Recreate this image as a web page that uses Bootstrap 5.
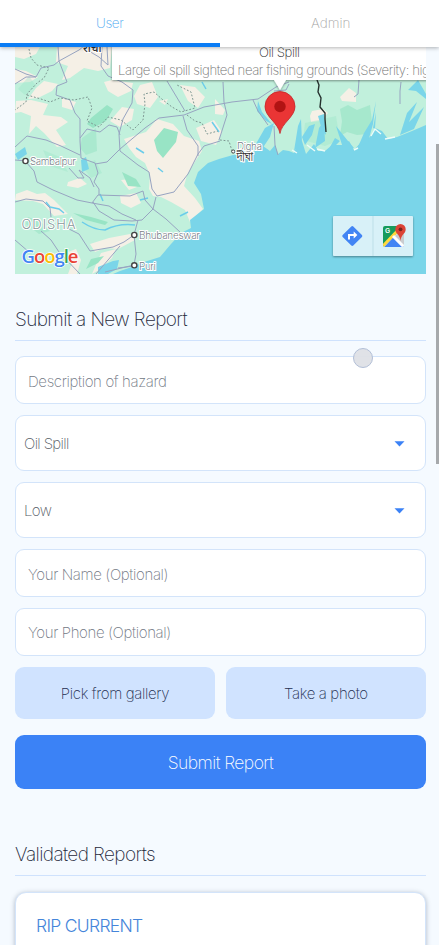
<!DOCTYPE html>
<html lang="en">
<head>
<meta charset="utf-8">
<meta name="viewport" content="width=device-width, initial-scale=1">
<title>Hazard Reports</title>
<link href="https://cdn.jsdelivr.net/npm/bootstrap@5.3.0/dist/css/bootstrap.min.css" rel="stylesheet">
<style>
html,body{height:945px;overflow:hidden}
body{background:#f5faff;font-family:Inter,"Liberation Sans",sans-serif;font-weight:200;color:#1e293b}
.tabs-bar{height:47px;box-shadow:0 1px 4px rgba(0,0,0,.3);z-index:3}
.tab-item{height:47px;font-size:13.5px;padding-top:3px;color:#a5a5a5;border-bottom:4px solid transparent}
.tab-item.on{color:#4aa8f0;border-color:#0a7cf5;letter-spacing:-.4px}
.tab-item.off{padding-left:3px}
.page-body{padding:0 13px 0 15px}
.map-box{height:227px}
.map-box svg{display:block}
.sect-title{font-size:19px;letter-spacing:-.62px;line-height:24px;font-weight:250;padding-bottom:8px;border-bottom:1px solid #cfe2fd;margin-bottom:15px}
.first-title{margin-top:34px}
.second-title{margin-top:54px;margin-bottom:16px}
.field-stack{gap:10.8px}
.form-control.field,.pick{border:1px solid #d3e4fa;border-radius:9px;background:#fff;font-size:15px;font-weight:200;color:#555c66}
.form-control.field{height:48px;padding:2px 12px 0;letter-spacing:-.37px}
.field::placeholder{color:#717783;opacity:1}
.pick{height:56.4px;padding:2px 20px 0 8px;letter-spacing:-.65px}
.soft-btn{height:52px;border-radius:9px;background:#d0e3ff;font-size:15px;font-weight:250;letter-spacing:-.35px;padding-top:8px;color:#1e2d50;border:0}
.main-btn{height:54.5px;border-radius:9px;background:#3b82f6;color:#fff;font-size:17.5px;font-weight:250;letter-spacing:-.55px;padding-top:8px;margin-top:5px;border:0}
.report-card{border:1px solid #d3e4fa;border-radius:11px;height:80px;box-shadow:0 1px 5px rgba(40,60,90,.35);padding:21px 20px}
.report-card h3{font-size:17.5px;letter-spacing:-.7px;font-weight:300;color:#4585da;line-height:24px;margin:0}
.scroll-thumb{right:0;top:144px;width:3.5px;height:320px;background:#a6a9ac;z-index:4}
.touch-dot{left:353px;top:348px;width:20px;height:20px;border:1.5px solid #b2bfd7;background:rgba(222,224,229,.94);z-index:4}
</style>
<script src="https://cdn.jsdelivr.net/npm/bootstrap@5.3.0/dist/js/bootstrap.bundle.min.js"></script>
</head>
<body>
<header class="tabs-bar d-flex bg-white position-relative">
  <div class="tab-item on w-50 d-flex align-items-center justify-content-center">User</div>
  <div class="tab-item off w-50 d-flex align-items-center justify-content-center">Admin</div>
</header>
<main class="page-body">
  <div class="map-box">
  <svg width="411" height="227" viewBox="15 47 411 227" font-family="Inter,'Noto Sans',sans-serif">
    <defs><filter id="sh" x="-10%" y="-20%" width="120%" height="150%"><feDropShadow dx="0" dy="1" stdDeviation="1" flood-opacity=".4"/></filter></defs>
    <rect x="15" y="47" width="411" height="227" fill="#c1f0dc"/>
    <!-- farmland -->
    <g fill="#f5f0e6">
      <path d="M15 47H40L36 54L24 59L15 57ZM57 47H112L110 68L98 71L84 68L70 78L62 80L68 66L56 62ZM15 69L26 71L38 77L30 82L15 83Z"/>
      <path d="M104 82L112 80L133 83L131 91L118 97L108 91ZM44 81L58 84L52 91L38 98L28 99L36 88ZM16 101L31 100L48 104L43 115L61 117L68 122L56 130L66 145L57 147L44 133L36 126L29 134L31 116L21 112L15 113ZM62 98L76 102L72 110L62 107Z"/>
      <path d="M140 85L152 82L158 97L150 108L137 104L134 96ZM159 101L168 99L165 105ZM122 107L134 109L132 120L120 127L110 121ZM180 85L195 87L205 97L198 108L188 101ZM124 139L146 132L157 119L173 124L184 136L199 141L202 151L196 160L187 175L184 186L195 198L203 209L190 222L185 210L171 202L161 197L153 196L149 189L150 175L145 163L136 157L129 148ZM196 128L214 120L222 132L216 145L201 141Z"/>
      <path d="M68 182L80 178L87 184L78 188L67 186ZM16 194L27 190L37 194L45 193L54 200L68 214L54 216L43 204L33 201L15 200ZM120 196L136 193L141 203L131 208L121 203ZM121 180L130 179L137 187L129 190ZM90 244L109 238L130 234L135 240L118 249L105 248L95 252ZM68 252L76 249L81 260L77 274H68L72 263ZM101 253L116 249L112 258L99 270L92 274Z"/>
      <path d="M340 97L349 88L356 93V102L342 101ZM310 116L312 111L323 109L328 113L320 121L311 122ZM215 99L225 110L223 115L215 114Z"/>
    </g>
    <!-- forest -->
    <g fill="#98e4c5">
      <path d="M91 118L107 105L113 109L106 121L93 128L87 124ZM154 140L164 128L178 132L176 142L163 158L157 151ZM122 172L136 179L141 187L128 186ZM73 213L91 217L108 222L105 225L86 220ZM91 259L104 256L98 263L86 269Z"/>
      <path d="M340 109L348 105L357 110L370 105L372 122L367 134L357 135L347 132L340 136L342 121Z" opacity=".65"/><path d="M82 138L96 128L97 151L86 155L80 148ZM28 217L40 221L50 231L39 234L26 224Z" opacity=".55"/>
      <path d="M18 89L29 76L36 86L25 95ZM43 150L60 157L68 172L50 166ZM82 166L95 160L102 173L91 178ZM305 123L336 116L340 140L325 146L303 140Z" opacity=".35"/>
    </g>
    <!-- sea -->
    <path d="M426 125L412 131L397 137L388 139L382 131L375 128L370 137L362 141L354 150L349 141L343 145L332 145L325 151L318 151L314 144L306 154L302 141L297 145L294 153L289 151L283 150L278 154L275 145L270 151L263 146L258 150L248 154L233 155L219 159L208 163L198 172L194 183L201 194L204 209L190 220L191 228L181 233L171 244L160 257L144 262L132 267L120 271L113 274H426Z" fill="#7ad5e9"/>
    <!-- deltas, rivers and lakes -->
    <g fill="#7ad5e9">
      <path d="M253 149L265 128L274 123L270 137L260 152ZM294 151L298 126L301 119L302 143ZM302 137L309 126L315 124L312 135L305 145ZM315 148L319 128L324 121L325 141ZM318 116L324 114L326 135L322 130ZM330 147L335 138L340 141L335 146ZM358 147L364 133L372 120L376 101L373 124L368 142ZM343 148L336 126L348 141L354 148ZM373 128L376 112L375 129ZM400 135L407 113L417 102L409 122L424 107L414 129ZM408 90L418 80L426 94V99L416 91ZM15 154L25 147L27 154L18 160ZM81 160L86 157L89 169L82 172ZM98 267L113 261L119 260L117 269L108 274H98Z"/>
      <path d="M258 101L262 112L272 124L266 121L257 111Z"/>
    </g>
    <g fill="none" stroke="#6bcdea" stroke-width="1.5"><path d="M82 222Q94 230 105 230Q119 223 135 225M46 202L50 207L59 209L64 213M136 148L144 153M158 168L163 172M180 216L188 212M202 82L206 89M212 122L219 132M100 194L103 201M140 200L148 198"/></g>
    <path d="M371 136L375 129L381 134M385 139L395 137M354 150L358 148M317 149L325 151M307 145L315 151M292 150L297 153" fill="none" stroke="#eefcf8" stroke-width="1.4"/>
    <!-- roads -->
    <g fill="none" stroke="#97a4c1" stroke-width="1">
      <path d="M15 84L26 77L36 77L41 68L54 65L59 61L79 50L83 47M15 69L26 74L36 77M58 47L59 61L67 82L57 86L56 95L70 100L75 113L80 119V141L81 158L95 163L98 173L94 182L99 189L99 195M82 47L99 57L108 65L107 47M102 47L101 66L108 76L122 82L133 90L132 103L123 119L119 134L120 151L138 165L149 172L152 189L157 196L174 192L188 174L198 154L204 146L220 141M80 138L87 129L100 132L109 125L117 127L120 135M15 147L27 136L46 140L61 146L80 155M120 149L116 153L107 162L95 164M120 149L145 128L159 118L184 115L204 107L232 102L258 99L276 87L289 82M167 81L185 111M183 116L187 130L198 146L198 156M25 161L34 171L37 182L53 190L77 200L92 203L98 195L130 196L143 191L145 200L153 209L156 197M93 202L99 211L114 220L132 221L142 220L153 209L166 219L180 232M15 160L27 161M69 168L78 178L84 178L79 170L90 178L94 187M15 202L26 199L43 201L50 208L51 217M92 203L109 206L122 214L136 220M41 231L51 240L59 252L80 274M15 240L29 252M69 229L79 234L90 251L113 247L124 242L134 235L138 220M134 235L136 254L134 265L105 272M96 274L120 246M134 266L118 268M223 82L224 102L227 115L219 140M253 100L258 111L268 125M274 126L275 145L278 155M359 80L358 94L354 97M401 82L400 91L400 104M289 84L286 90L274 91"/>
    </g>
    <g fill="none" stroke="#7c9691" stroke-width="1" stroke-dasharray="1.8 1.8"><path d="M29 49L31 58L37 65L49 68L44 78L37 83L27 94L26 102L15 110M27 95L41 99L50 102L60 98L74 100L88 97L92 108L87 121L99 127L108 117L121 120L133 130L143 120L145 104L144 94L154 92L163 100L172 107L181 112L195 108L191 92L177 85M187 115L195 121L202 123L207 134L218 131M220 140L229 141L232 151"/></g>
    <path d="M317 80L319 85L318 92L321 98L320 107L325 113V119L326 132" fill="none" stroke="#25312e" stroke-width="1.4"/>
    <!-- place names -->
    <g fill="#fff" stroke="#444" stroke-width="1.4"><circle cx="25.5" cy="161" r="2.6"/><circle cx="134.3" cy="235" r="2.6"/><circle cx="134.3" cy="265.3" r="2.6"/><circle cx="233.2" cy="151.5" r="1.6" stroke-width="1"/></g>
    <g fill="#788087" stroke="#fff" stroke-width="2" paint-order="stroke" font-size="10.2" font-weight="300">
      <text x="30" y="165.2" textLength="46">Sambalpur</text><text x="139" y="239.3" textLength="61">Bhubaneswar</text><text x="139" y="269.8" textLength="17">Puri</text><text x="237" y="149.5" textLength="25">Digha</text>
      <text x="21.5" y="229" font-size="13" fill="#8a9a9c" textLength="54">ODISHA</text>
      <g font-family="'Noto Sans',FreeSans,sans-serif" fill="#333" font-weight="500"><text x="236.5" y="161" font-size="13.5">দীঘা</text><text x="83" y="52" font-size="11.5">रांची</text></g>
    </g>
    <text x="21.5" y="262.5" font-family="'Open Sans',sans-serif" font-size="18.5" font-weight="600" stroke="#fff" stroke-width="1.6" paint-order="stroke" textLength="57"><tspan fill="#4285f4">G</tspan><tspan fill="#ea4335">o</tspan><tspan fill="#fbbc04">o</tspan><tspan fill="#4285f4">g</tspan><tspan fill="#34a853">l</tspan><tspan fill="#ea4335">e</tspan></text>
    <!-- info window -->
    <path d="M112 40H440V80H286L280 90L274 80H112Z" fill="#fff" filter="url(#sh)"/>
    <text x="259" y="57.3" font-size="13.2" font-weight="250" fill="#222" textLength="41">Oil Spill</text>
    <text x="118" y="75" font-size="13.2" font-weight="200" fill="#727272" textLength="323">Large oil spill sighted near fishing grounds (Severity: high)</text>
    <path d="M280 133.5C278.5 123 265 117 265 106.5A15 15 0 0 1 295 106.5C295 117 281.5 123 280 133.5Z" fill="#ea3535" stroke="#c52528" stroke-width=".8"/><circle cx="280" cy="106.5" r="5.7" fill="#b11313"/>
    <!-- map actions -->
    <g filter="url(#sh)"><rect x="333" y="216" width="80" height="40" rx="1" fill="#d8f1f8"/></g><path d="M373 216V256" stroke="#bddfe8"/>
    <rect x="344.8" y="228.5" width="15" height="15" rx="1.4" fill="#4285f4" transform="rotate(45 352.3 236)"/><path d="M349 239.5V235H355" fill="none" stroke="#fff" stroke-width="2"/><path d="M353.7 231.6L357.4 235L353.7 238.4Z" fill="#fff"/>
    <g><clipPath id="mc"><rect x="383" y="226" width="21" height="21" rx="2"/></clipPath><g clip-path="url(#mc)"><path d="M383 226H404L383 247Z" fill="#169b5c"/><path d="M404 226V247H395L390 242Z" fill="#c9ccd0"/><path d="M384 247L394 236.5L404 247Z" fill="#4285f4"/><path d="M382 247L403 225" stroke="#ffd83d" stroke-width="3"/><path d="M393 236L405 248" stroke="#fff" stroke-width="3"/></g>
    <path d="M400.5 241C400 234 395.3 234 395.3 229.2A5.2 5.2 0 0 1 405.7 229.2C405.7 234 401 234 400.5 241Z" fill="#db4437"/><circle cx="400.5" cy="229.3" r="1.9" fill="#7b231d"/><text x="385" y="233" font-size="6.8" font-weight="600" fill="#fff">G</text></g>
  </svg>
  </div>
  <h2 class="sect-title first-title">Submit a New Report</h2>
  <form class="d-flex flex-column field-stack">
    <input class="form-control field" placeholder="Description of hazard">
    <div class="pick d-flex align-items-center justify-content-between"><span>Oil Spill</span><svg width="11" height="6"><path d="M.5 .2H10.5L5.5 5.5Z" fill="#3b82f6"/></svg></div>
    <div class="pick d-flex align-items-center justify-content-between"><span>Low</span><svg width="11" height="6"><path d="M.5 .2H10.5L5.5 5.5Z" fill="#3b82f6"/></svg></div>
    <input class="form-control field" placeholder="Your Name (Optional)">
    <input class="form-control field" placeholder="Your Phone (Optional)">
    <div class="d-flex field-stack">
      <button type="button" class="btn soft-btn flex-fill w-50">Pick from gallery</button>
      <button type="button" class="btn soft-btn flex-fill w-50">Take a photo</button>
    </div>
    <button type="button" class="btn main-btn w-100">Submit Report</button>
  </form>
  <h2 class="sect-title second-title">Validated Reports</h2>
  <article class="report-card bg-white"><h3>RIP CURRENT</h3></article>
</main>
<div class="scroll-thumb position-absolute"></div>
<div class="touch-dot position-absolute rounded-circle"></div>
</body>
</html>
